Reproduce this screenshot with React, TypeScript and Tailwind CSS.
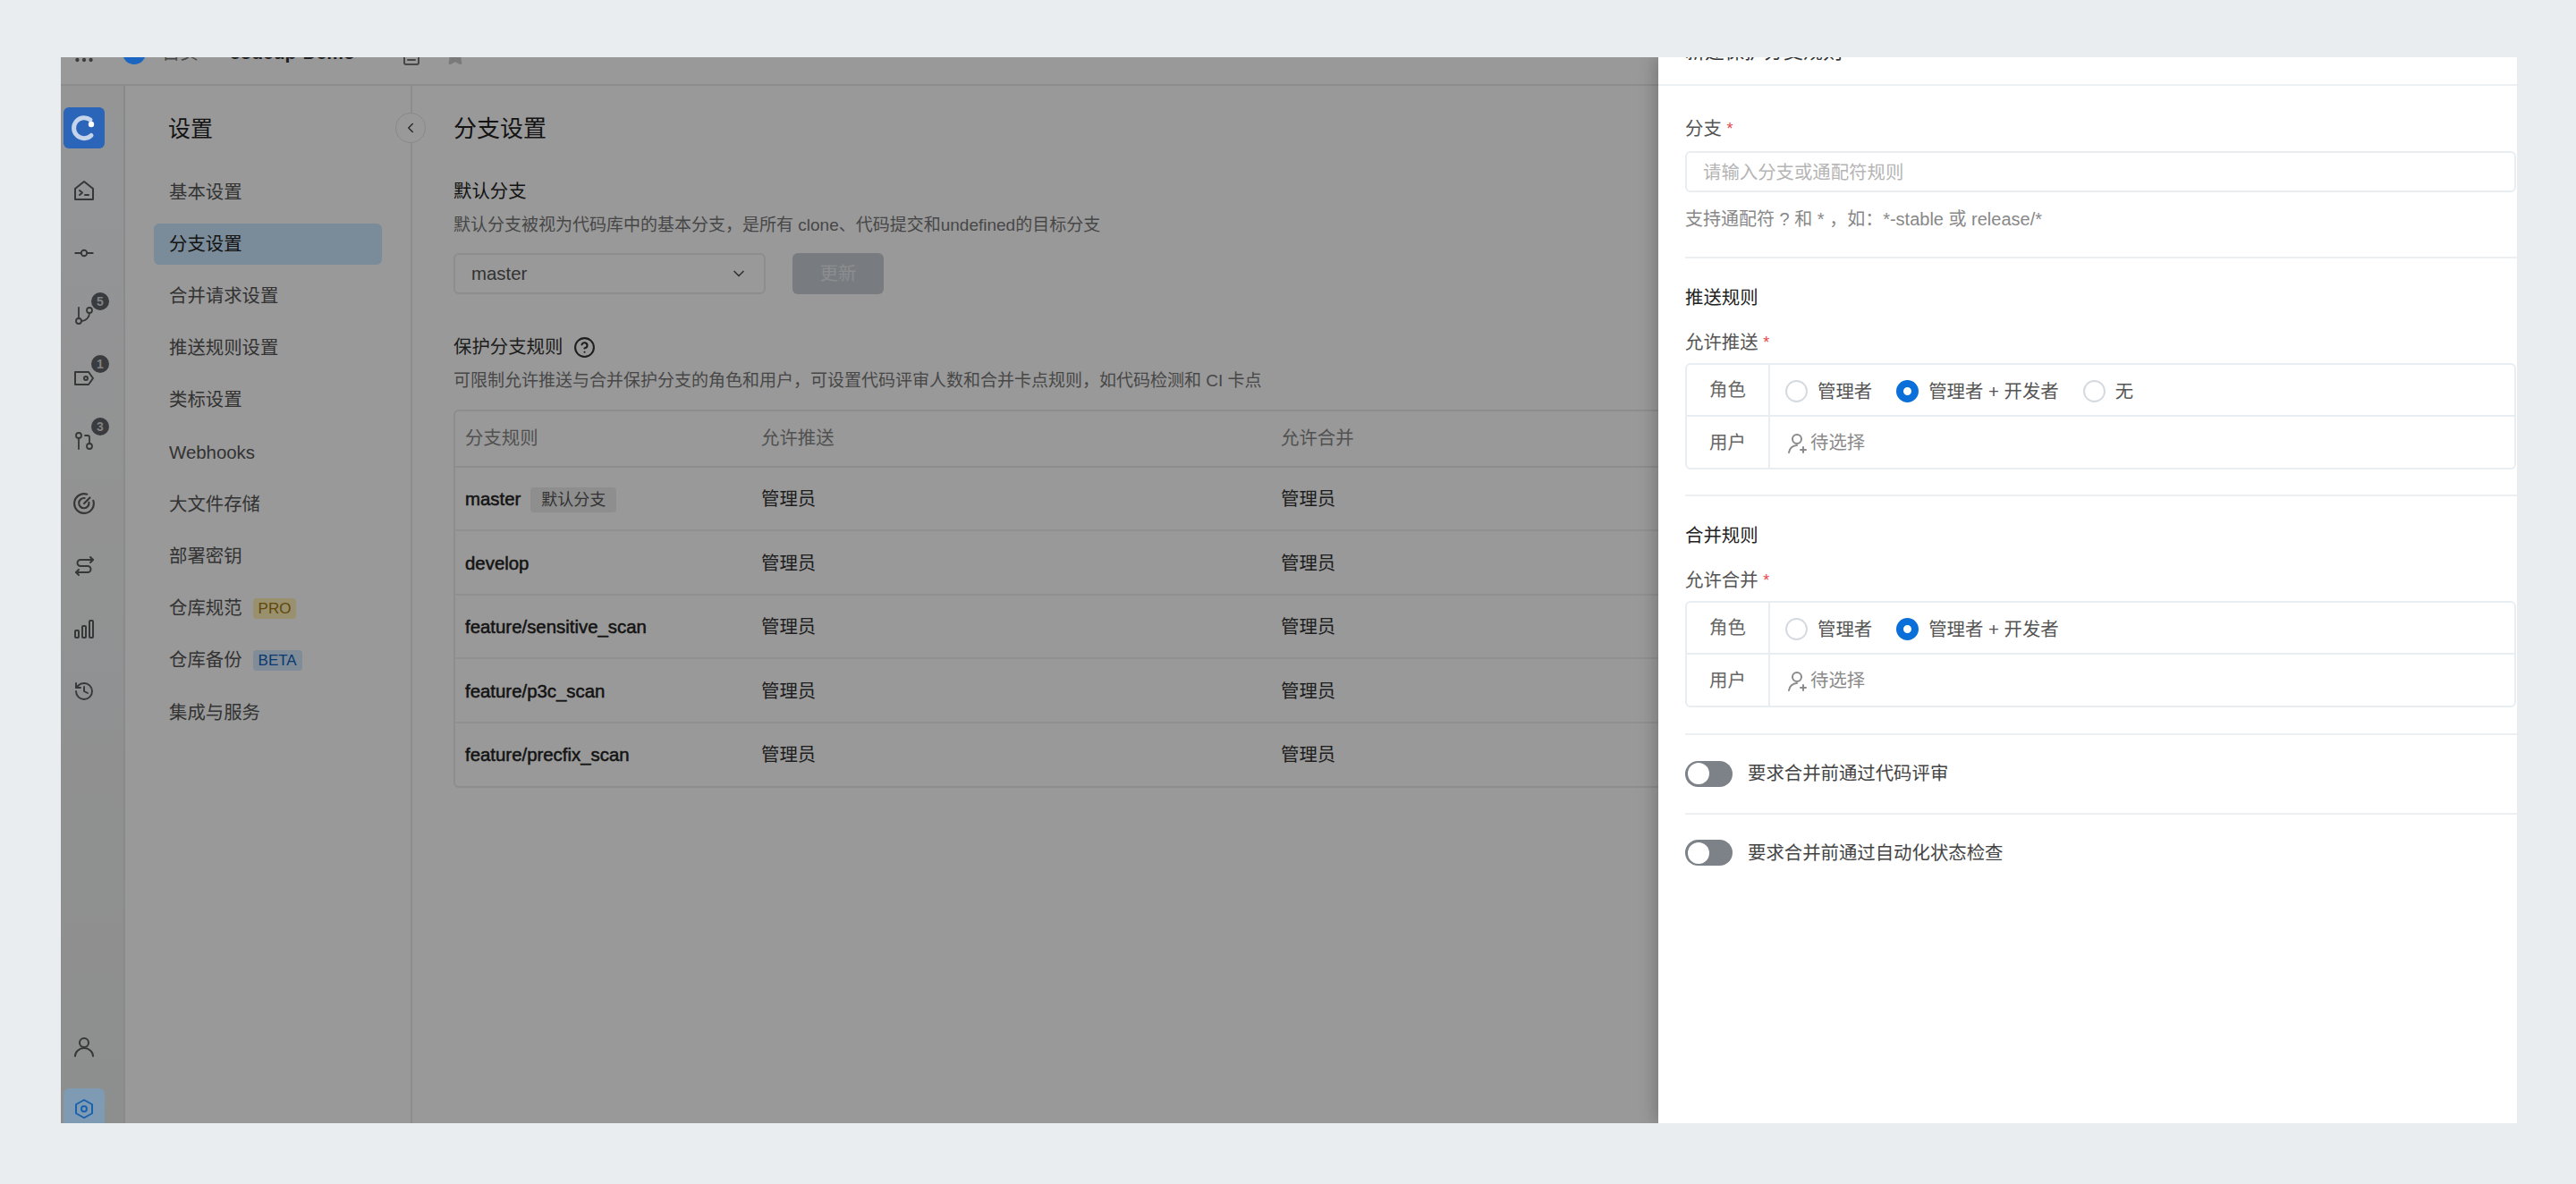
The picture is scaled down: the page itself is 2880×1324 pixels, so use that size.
import React from "react";
import {
  ChevronDown,
  ChevronLeft,
  CircleHelp,
  GitBranch,
  GitCommitHorizontal,
  GitPullRequest,
  History,
  MoreHorizontal,
  Star,
  FileText,
  X,
} from "lucide-react";

const FONT = "font-['Liberation_Sans','Noto_Sans_CJK_SC',sans-serif]";

const settingsLinks = [
  { label: "基本设置" },
  { label: "分支设置", active: true },
  { label: "合并请求设置" },
  { label: "推送规则设置" },
  { label: "类标设置" },
  { label: "Webhooks" },
  { label: "大文件存储" },
  { label: "部署密钥" },
  { label: "仓库规范", tag: "PRO", tagClass: "bg-[#fff0b8] text-[#a07a10]" },
  { label: "仓库备份", tag: "BETA", tagClass: "bg-[#d6ecff] text-[#1060b8]" },
  { label: "集成与服务" },
];

const branchRules = [
  { name: "master", isDefault: true },
  { name: "develop" },
  { name: "feature/sensitive_scan" },
  { name: "feature/p3c_scan" },
  { name: "feature/precfix_scan" },
];

const Glyph = ({ children, size = 24 }: { children: React.ReactNode; size?: number }) => (
  <svg width={size} height={size} viewBox="0 0 24 24" fill="none" stroke="currentColor" strokeWidth="2" strokeLinecap="round" strokeLinejoin="round">
    {children}
  </svg>
);

const RailIcon = ({ children, badge }: { children: React.ReactNode; badge?: number }) => (
  <div className="relative flex h-[70px] w-[46px] items-center justify-center text-[#5c5c5c]">
    {children}
    {badge !== undefined && (
      <span className="absolute left-[31px] top-[9px] flex h-5 w-5 items-center justify-center rounded-full bg-[#5f6368] text-[14px] font-bold text-[#d8d8d8]">
        {badge}
      </span>
    )}
  </div>
);

const Required = ({ children }: { children: React.ReactNode }) => (
  <div className="pt-[1px] text-[20.4px] leading-7 text-[#555]">
    {children} <span className="align-top text-[18px] text-[#e5484d]">*</span>
  </div>
);

const Radio = ({ label, checked }: { label: string; checked?: boolean }) => (
  <div className="mr-[27px] flex items-center gap-[11px]">
    <span
      className={
        checked
          ? "h-[25px] w-[25px] rounded-full border-[8px] border-[#0a6fd8] bg-white"
          : "h-[25px] w-[25px] rounded-full border-2 border-[#d5dae0] bg-white"
      }
    />
    <span className="text-[20.4px] text-[#555]">{label}</span>
  </div>
);

const RoleTable = ({ roles }: { roles: { label: string; checked?: boolean }[] }) => (
  <div className="mr-[1px] mt-[9px] rounded-md border-2 border-[#e8edf2]">
    <div className="flex h-[58px] border-b-2 border-[#e8edf2]">
      <div className="flex w-[93px] items-center justify-center border-r-2 border-[#e8edf2] text-[20.4px] text-[#666]">
        角色
      </div>
      <div className="flex items-center pl-[17px] pt-[4px]">
        {roles.map((role) => (
          <Radio key={role.label} label={role.label} checked={role.checked} />
        ))}
      </div>
    </div>
    <div className="flex h-[57px]">
      <div className="flex w-[93px] items-center justify-center border-r-2 border-[#e8edf2] pt-[2px] text-[20.4px] text-[#666]">
        用户
      </div>
      <div className="flex items-center gap-[2px] pl-[19px] pt-[2px] text-[20.4px] text-[#8a8a8a]">
        <Glyph>
          <circle cx="11" cy="7" r="5" />
          <path d="M2 22a9 9 0 0 1 9-8M18 16v6M15 19h6" />
        </Glyph>
        待选择
      </div>
    </div>
  </div>
);

const Toggle = ({ label }: { label: string }) => (
  <div className="flex items-center gap-[17px]">
    <div className="flex h-[29px] w-[53px] items-center rounded-full bg-[#7d8288] pl-[3px]">
      <span className="h-6 w-6 rounded-full bg-white" />
    </div>
    <span className="text-[20.4px] text-[#444]">{label}</span>
  </div>
);

const Divider = () => <div className="h-[2px] bg-[#edf0f3]" />;

const App = () => {
  return (
    <div className={`h-[1324px] w-[2880px] bg-[#e9edf0] px-[68px] py-[64px] ${FONT}`}>
      <div className="relative h-[1192px] w-[2746px] overflow-hidden bg-white">
        {/* page behind the drawer */}
        <div className="flex h-[32px] items-end border-b-2 border-[#ececec] bg-white">
          <div className="mb-[7px] flex h-[56px] items-center text-[#333]">
            <div className="mt-[16px] flex w-[52px] justify-center text-[#666]">
              <MoreHorizontal size={26} />
            </div>
            <div className="relative z-10 ml-[17px] h-[26px] w-[26px] rounded-full bg-[#1a66c0]" />
            <span className="ml-[18px] text-[20.4px] text-[#777]">首页</span>
            <ChevronLeft size={16} className="ml-[2px] rotate-180 text-[#aaa]" />
            <span className="ml-[17px] text-[21px] font-bold">codeup-Demo</span>
            <FileText size={24} className="ml-[51px] mt-[6px] text-[#777]" />
            <Star size={24} className="ml-[25px] mt-[6px] fill-[#ccc] text-[#ccc]" />
          </div>
        </div>

        <div className="flex h-[1160px]">
          <nav className="flex w-[72px] shrink-0 flex-col border-r-2 border-[#e6e6e6] bg-gradient-to-b from-[#f8f9fb] to-[#eceded] pl-[3px] pt-[24px]">
            <div className="relative z-10 flex h-[46px] w-[46px] items-center justify-center rounded-md bg-[#2b65ba] text-[#c4d4ea]">
              <svg width="32" height="32" viewBox="0 0 32 32" fill="none">
                <path d="M24 24.5A11.5 11.5 0 1 1 23 7" stroke="currentColor" strokeWidth="5" strokeLinecap="round" />
                <circle cx="24" cy="12" r="3.2" fill="#ffffff" />
              </svg>
            </div>
            <div className="mt-[12px]">
              <RailIcon>
                <Glyph>
                  <path d="M2 10 12 2l10 8v12H2z" />
                  <path d="m7 12 3 2.5L7 17M13 17h4" />
                </Glyph>
              </RailIcon>
              <RailIcon><GitCommitHorizontal size={26} strokeWidth={1.7} /></RailIcon>
              <RailIcon badge={5}><GitBranch size={24} strokeWidth={1.8} /></RailIcon>
              <RailIcon badge={1}>
                <Glyph>
                  <path d="M2 5h15l5 7-5 7H2z" />
                  <circle cx="14" cy="12" r="2" />
                </Glyph>
              </RailIcon>
              <RailIcon badge={3}><GitPullRequest size={24} strokeWidth={1.8} /></RailIcon>
              <RailIcon>
                <Glyph size={26}>
                  <path d="M21.5 9A10 10 0 1 1 15 2.5" />
                  <path d="M17 11a5.2 5.2 0 1 1-4.5-4.5" />
                  <path d="M12 12l6-6" />
                </Glyph>
              </RailIcon>
              <RailIcon>
                <Glyph>
                  <path d="M19 2l3 3-3 3" />
                  <path d="M22 5H8a3.5 3.5 0 0 0 0 7h8a3.5 3.5 0 0 1 0 7H3" />
                  <path d="M6 16l-3 3 3 3" />
                </Glyph>
              </RailIcon>
              <RailIcon>
                <Glyph>
                  <rect x="2" y="14" width="4" height="8" rx="1" />
                  <rect x="10" y="9" width="4" height="13" rx="1" />
                  <rect x="18" y="3" width="4" height="19" rx="1" />
                </Glyph>
              </RailIcon>
              <RailIcon><History size={24} strokeWidth={1.9} /></RailIcon>
            </div>
            <div className="mb-[-7px] mt-auto">
              <div className="flex h-[46px] w-[46px] items-center justify-center text-[#5c5c5c]">
                <Glyph>
                  <circle cx="12" cy="7" r="5" />
                  <path d="M2 22a10 9 0 0 1 20 0" />
                </Glyph>
              </div>
              <div className="relative z-10 mt-[23px] flex h-[46px] w-[46px] items-center justify-center rounded-t-md bg-[#7f9ab3] text-[#1a62b0]">
                <Glyph>
                  <path d="M12 2l9 5v10l-9 5-9-5V7z" />
                  <circle cx="12" cy="12" r="3" />
                </Glyph>
              </div>
            </div>
          </nav>

          <aside className="relative w-[321px] shrink-0 border-r-2 border-[#ececec] px-[32px] pt-[32px]">
            <div className="pl-[16px] text-[25px] leading-8 text-[#222]">设置</div>
            <button className="absolute right-[-17px] top-[30px] flex h-[34px] w-[34px] items-center justify-center rounded-full border border-[#e5e5e5] bg-white text-[#444]">
              <ChevronLeft size={18} />
            </button>
            <ul className="mt-[32px] flex flex-col gap-[12.2px]">
              {settingsLinks.map((link) => (
                <li
                  key={link.label}
                  className={`flex h-[46px] items-center gap-[12px] rounded-md pl-[17px] text-[20.4px] ${
                    link.active ? "bg-[#cce8ff] text-[#222]" : "text-[#555]"
                  }`}
                >
                  {link.label}
                  {link.tag && (
                    <span className={`rounded px-[6px] text-[17px] leading-[23px] ${link.tagClass}`}>{link.tag}</span>
                  )}
                </li>
              ))}
            </ul>
          </aside>

          <main className="min-w-0 flex-1 pl-[46px] pt-[32px]">
            <h1 className="text-[26px] leading-8 text-[#222]">分支设置</h1>
            <h2 className="mt-[40px] text-[20.4px] leading-7 text-[#222]">默认分支</h2>
            <p className="mt-[10px] text-[19px] leading-7 text-[#777]">
              默认分支被视为代码库中的基本分支，是所有 clone、代码提交和undefined的目标分支
            </p>
            <div className="mt-[17px] flex gap-[30px]">
              <div className="flex h-[46px] w-[349px] items-center justify-between rounded-md border-2 border-[#ebebeb] pl-[18px] pr-[18px] text-[20.4px] text-[#555]">
                master
                <ChevronDown size={20} />
              </div>
              <button className="h-[46px] w-[102px] rounded-md bg-[#c9ced5] text-[20.4px] text-white/60">更新</button>
            </div>
            <div className="mt-[45px] flex items-center gap-[12px] text-[20.4px] leading-7 text-[#333]">
              保护分支规则
              <CircleHelp size={25} strokeWidth={2} />
            </div>
            <p className="mt-[10px] text-[19px] leading-7 text-[#777]">
              可限制允许推送与合并保护分支的角色和用户，可设置代码评审人数和合并卡点规则，如代码检测和 CI 卡点
            </p>
            <div className="mt-[18px] rounded-tl-md rounded-bl-md border-y-2 border-l-2 border-[#ebebeb]">
              <div className="flex h-[63px] items-center border-b-2 border-[#ebebeb] pl-[11px] text-[20.4px] text-[#888]">
                <div className="w-[331px]">分支规则</div>
                <div className="w-[581px]">允许推送</div>
                <div>允许合并</div>
              </div>
              {branchRules.map((rule, i) => (
                <div
                  key={rule.name}
                  className={`flex items-center pl-[11px] pt-[2px] text-[20.4px] text-[#333] ${
                    i < branchRules.length - 1 ? "h-[71.4px] border-b-2 border-[#f0f0f0]" : "h-[70px]"
                  }`}
                >
                  <div className="flex w-[331px] items-center gap-[11px]">
                    <span className="text-[#222] [-webkit-text-stroke:0.5px_#222]">{rule.name}</span>
                    {rule.isDefault && (
                      <span className="rounded-sm bg-[#ededed] px-[12px] text-[18px] leading-7 text-[#555]">
                        默认分支
                      </span>
                    )}
                  </div>
                  <div className="w-[581px]">管理员</div>
                  <div>管理员</div>
                </div>
              ))}
            </div>
          </main>
        </div>

        {/* dim layer and drawer lie over the page */}
        <div className="absolute inset-0 bg-black/40" />
        <div className="absolute bottom-0 right-0 top-0 z-20 w-[960px] bg-white shadow-[-6px_0_16px_rgba(0,0,0,0.18)]">
          <div className="flex h-[32px] items-end justify-between border-b-2 border-[#edf0f3] pl-[30px] pr-[12px]">
            <span className="mb-[22px] text-[22px] leading-7 text-[#333]">新建保护分支规则</span>
            <X size={24} className="mb-[28px] text-[#666]" />
          </div>
          <div className="pl-[30px]">
            <div className="pt-[33px]">
              <Required>分支</Required>
              <div className="mr-[1px] mt-[11px] flex h-[46px] items-center rounded-md border-2 border-[#e8edf2] pl-[18px] pt-[2px] text-[20.4px] text-[#b5b5b5]">
                请输入分支或通配符规则
              </div>
              <p className="mt-[16px] text-[20px] leading-7 text-[#888]">
                支持通配符 ? 和 * ，如：*-stable 或 release/*
              </p>
            </div>
            <div className="mt-[28px]"><Divider /></div>
            <div className="pt-[30px]">
              <h3 className="text-[20.4px] leading-7 text-[#222]">推送规则</h3>
              <div className="mt-[21px]"><Required>允许推送</Required></div>
              <RoleTable roles={[{ label: "管理者" }, { label: "管理者 + 开发者", checked: true }, { label: "无" }]} />
            </div>
            <div className="mt-[28px]"><Divider /></div>
            <div className="pt-[30px]">
              <h3 className="text-[20.4px] leading-7 text-[#222]">合并规则</h3>
              <div className="mt-[21px]"><Required>允许合并</Required></div>
              <RoleTable roles={[{ label: "管理者" }, { label: "管理者 + 开发者", checked: true }]} />
            </div>
            <div className="mt-[29px]"><Divider /></div>
            <div className="py-[28px]"><Toggle label="要求合并前通过代码评审" /></div>
            <Divider />
            <div className="pt-[28px]"><Toggle label="要求合并前通过自动化状态检查" /></div>
          </div>
        </div>
      </div>
    </div>
  );
};

export default App;
